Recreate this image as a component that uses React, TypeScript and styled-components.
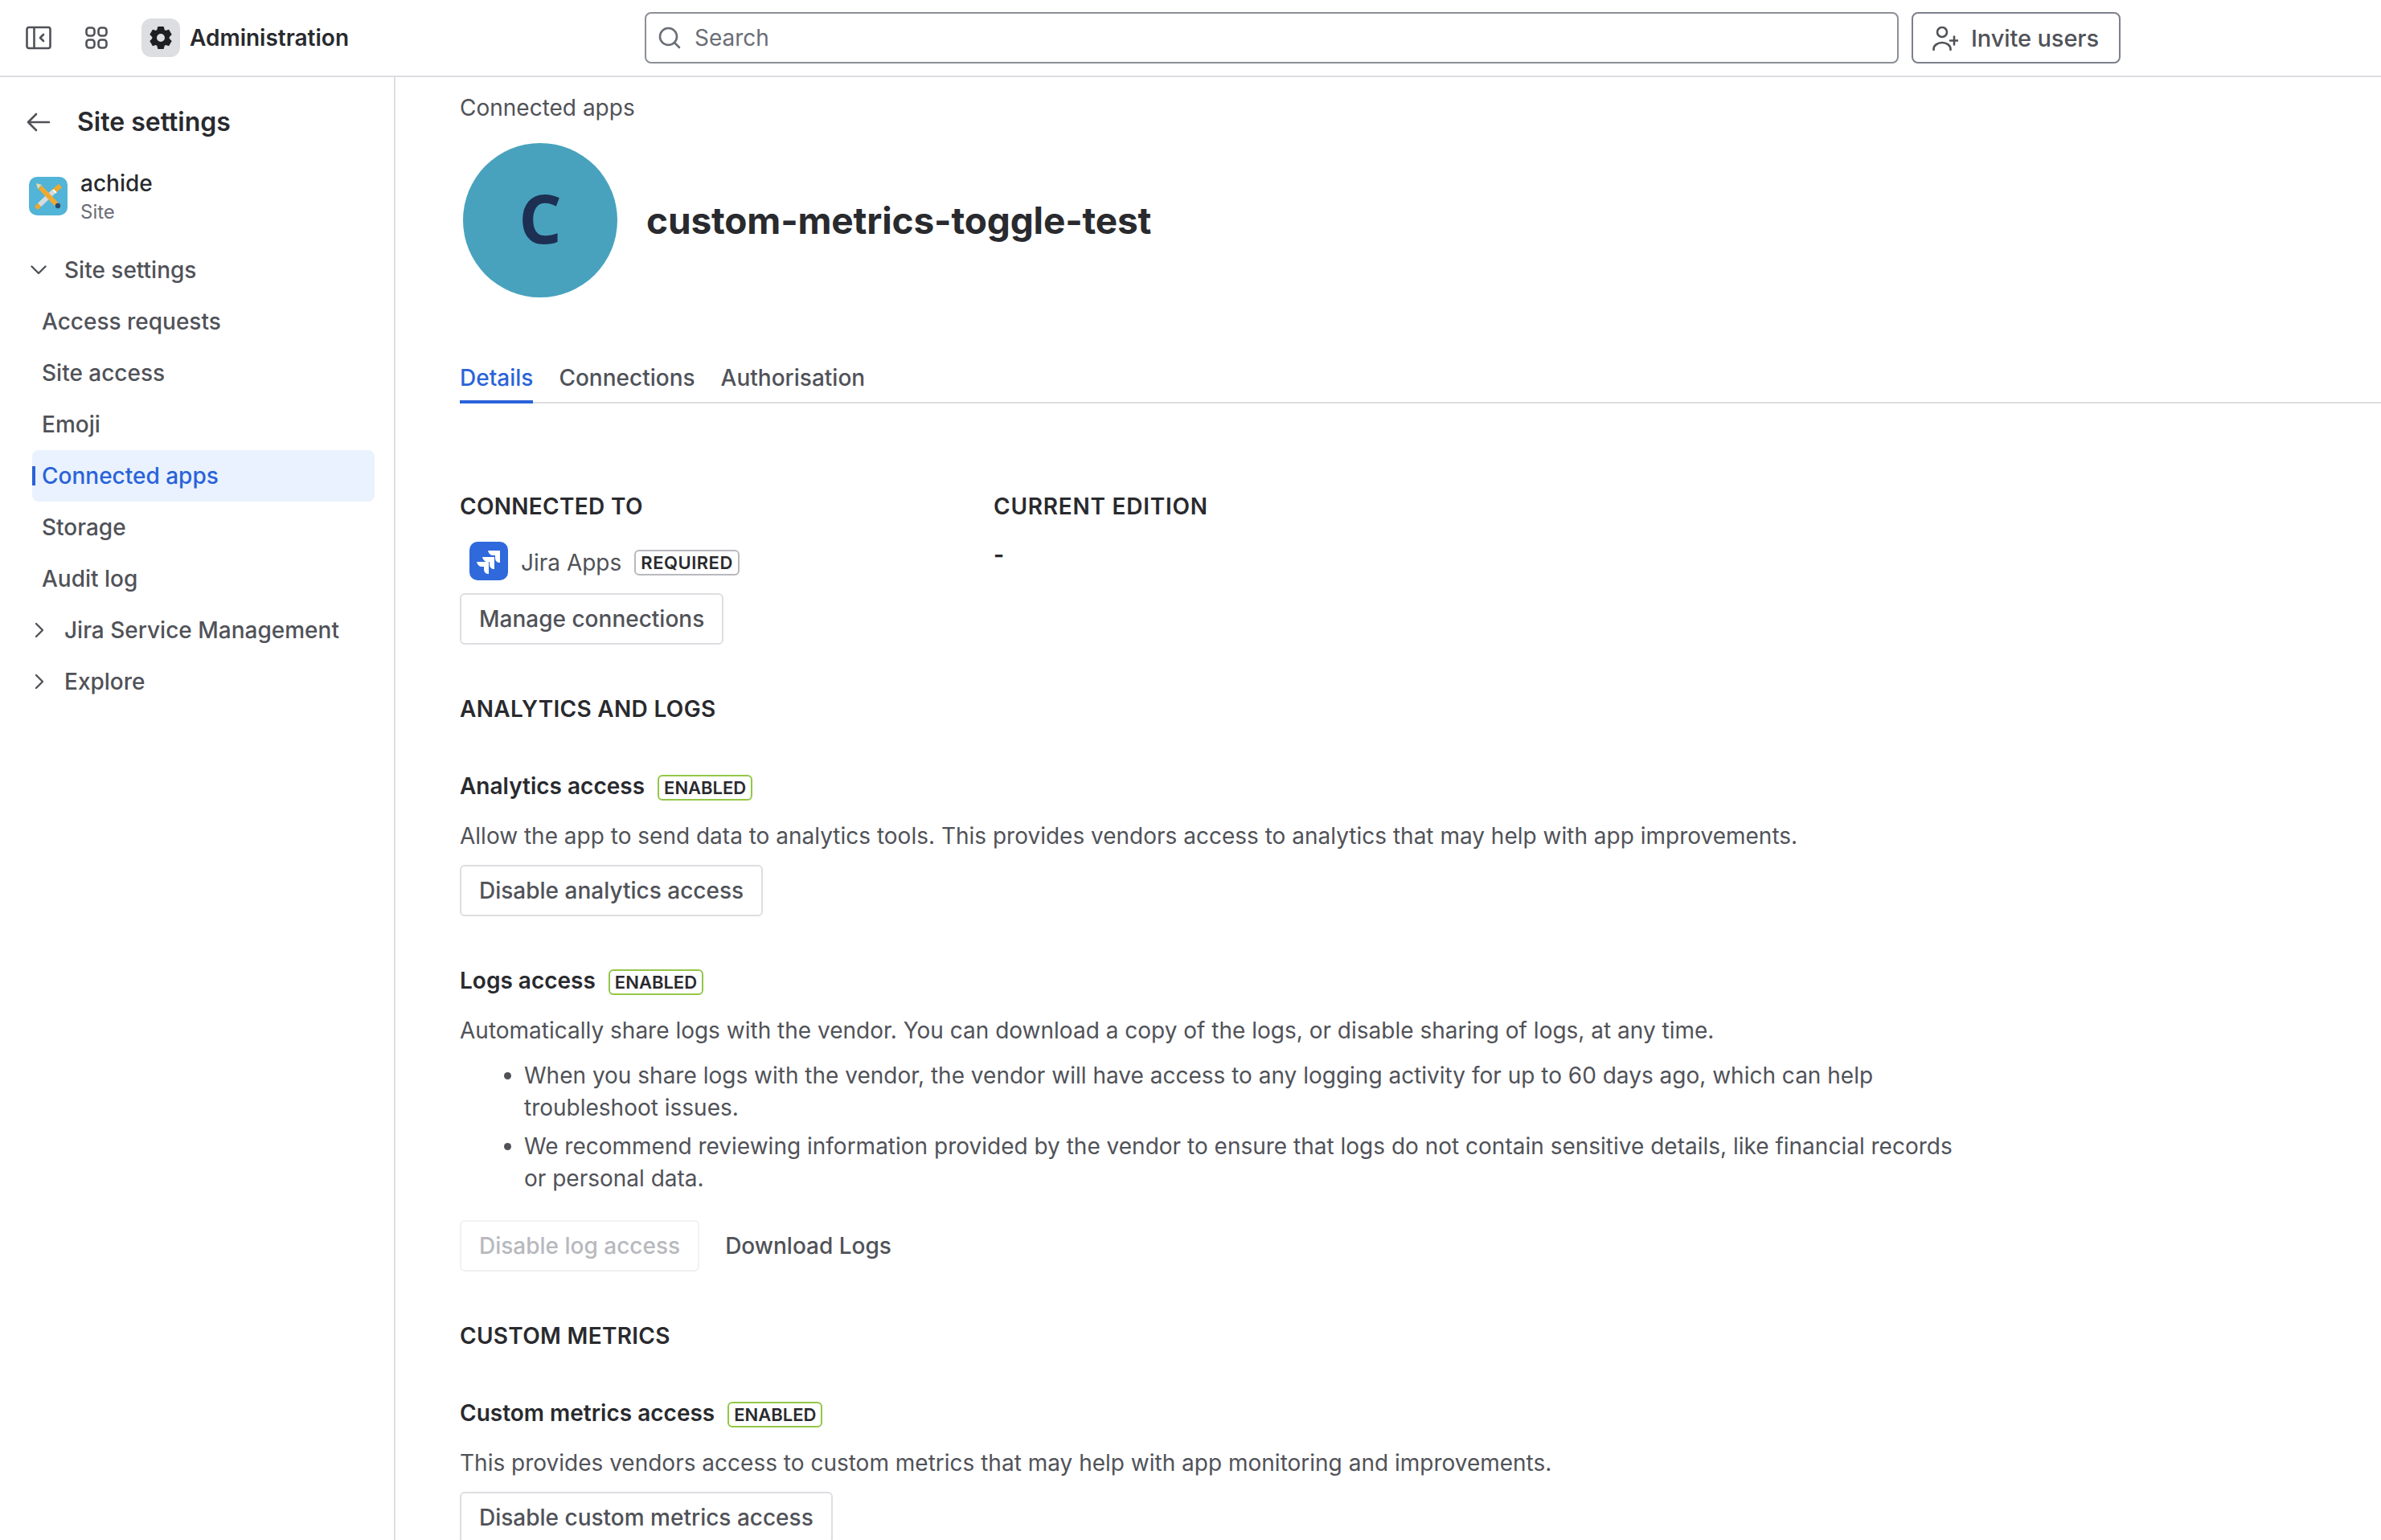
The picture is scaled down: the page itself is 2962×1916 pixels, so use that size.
import React from "react";
import styled, { createGlobalStyle } from "styled-components";

const GlobalStyle = createGlobalStyle`
	html, body {
		margin: 0;
		padding: 0;
		background: #fff;
		overflow: hidden;
	}
	* {
		box-sizing: border-box;
	}
	body {
		font-family: Inter, "Liberation Sans", sans-serif;
		font-size: 28px;
		line-height: 40px;
		color: #505258;
	}
`;

const Page = styled.div`
	width: 2962px;
	height: 1916px;
	display: flex;
	flex-direction: column;
	overflow: hidden;
`;

const TopBar = styled.header`
	height: 96px;
	flex: none;
	display: flex;
	align-items: center;
	padding-left: 32px;
	border-bottom: 2px solid #dddee1;
`;

const BarIcon = styled.span<{ $gap: number }>`
	display: flex;
	color: #505258;
	margin-right: ${(p) => p.$gap}px;
`;

const GearTile = styled.span`
	width: 48px;
	height: 48px;
	border-radius: 12px;
	background: #dddee1;
	display: flex;
	align-items: center;
	justify-content: center;
	color: #1e1f21;
	margin-right: 12px;
`;

const ProductName = styled.span`
	font-weight: 600;
	color: #292a2e;
	width: 566px;
`;

const SearchBox = styled.div`
	width: 1560px;
	height: 64px;
	border: 2px solid #8c8f97;
	border-radius: 8px;
	display: flex;
	align-items: center;
	gap: 17px;
	padding-left: 15px;
	color: #6b6e76;
	margin-right: 16px;
`;

const InviteButton = styled.div`
	width: 260px;
	height: 64px;
	border: 2px solid #7d818a;
	border-radius: 8px;
	display: flex;
	align-items: center;
	gap: 16px;
	padding: 2px 0 0 24px;
	font-size: 29px;
	font-weight: 500;
	letter-spacing: -0.1px;
	color: #505258;
	white-space: nowrap;
`;

const Body = styled.div`
	flex: 1;
	display: flex;
	min-height: 0;
`;

const Sidebar = styled.aside`
	width: 492px;
	flex: none;
	border-right: 2px solid #dddee1;
	padding: 0 24px 0 40px;
`;

const SideHeader = styled.div`
	height: 64px;
	margin-top: 24px;
	margin-left: -7px;
	display: flex;
	align-items: center;
	gap: 33px;
	color: #505258;
`;

const SideTitle = styled.div`
	font-size: 32px;
	font-weight: 600;
	color: #292a2e;
`;

const SiteCard = styled.div`
	margin-top: 20px;
	margin-left: -4px;
	display: flex;
	align-items: center;
	gap: 16px;
	height: 80px;
`;

const SiteName = styled.div`
	color: #292a2e;
	font-weight: 500;
	line-height: 40px;
`;

const SiteKind = styled.div`
	font-size: 24px;
	line-height: 32px;
	color: #6b6e76;
`;

const NavList = styled.nav`
	margin-top: 20px;
	display: flex;
	flex-direction: column;
`;

const NavRow = styled.div<{ $active?: boolean; $child?: boolean }>`
	position: relative;
	height: 64px;
	display: flex;
	align-items: center;
	border-radius: 8px;
	font-weight: 500;
	padding-left: ${(p) => (p.$child ? 12 : 0)}px;
	color: ${(p) => (p.$active ? "#2a63d9" : "#505258")};
	background: ${(p) => (p.$active ? "#e9f2fe" : "transparent")};
	${(p) =>
		p.$active &&
		`&::before {
			content: "";
			position: absolute;
			left: 0;
			top: 20px;
			width: 4px;
			height: 24px;
			background: #2a63d9;
		}`}
`;

const Chevron = styled.span`
	width: 40px;
	margin: 0 12px 0 -12px;
	display: flex;
	justify-content: center;
	color: #505258;
`;

const Main = styled.main`
	flex: 1;
	min-width: 0;
	padding: 18px 0 0 80px;
`;

const Crumb = styled.div``;

const AppHead = styled.div`
	margin-top: 24px;
	margin-left: 4px;
	display: flex;
	align-items: center;
	gap: 36px;
`;

const Avatar = styled.div`
	width: 192px;
	height: 192px;
	padding-bottom: 6px;
	border-radius: 50%;
	background: #48a2bd;
	color: #1d2f52;
	font-family: "Open Sans", sans-serif;
	font-size: 84px;
	font-weight: 700;
	display: flex;
	align-items: center;
	justify-content: center;
`;

const AppTitle = styled.h1`
	margin: 0;
	font-size: 46px;
	line-height: 56px;
	font-weight: 700;
	letter-spacing: -0.15px;
	color: #292a2e;
`;

const TabBar = styled.div`
	margin-top: 67px;
	display: flex;
	gap: 32px;
	height: 65px;
	border-bottom: 2px solid #dddee1;
`;

const Tab = styled.div<{ $active?: boolean }>`
	height: 65px;
	padding-top: 13px;
	font-weight: 500;
	color: ${(p) => (p.$active ? "#2a63d9" : "#505258")};
	border-bottom: ${(p) => (p.$active ? "4px solid #2a63d9" : "none")};
`;

const InfoGrid = styled.div`
	margin-top: 108px;
	display: grid;
	grid-template-columns: 664px auto;
	justify-content: start;
`;

const Heading = styled.div<{ $top?: number; $wide?: boolean }>`
	font-weight: 600;
	letter-spacing: ${(p) => (p.$wide ? 0.75 : 0.3)}px;
	color: #292a2e;
	margin-top: ${(p) => p.$top ?? 0}px;
`;

const Dash = styled.div`
	margin-top: 20px;
	font-weight: 700;
	color: #292a2e;
`;

const JiraRow = styled.div`
	margin-top: 24px;
	margin-left: 12px;
	height: 48px;
	display: flex;
	align-items: center;
	gap: 16px;
`;

const JiraLabel = styled.span`
	margin-top: 3px;
`;

const Badge = styled.span<{ $green?: boolean }>`
	height: 32px;
	margin-top: 4px;
	padding: 0 6px;
	border: 2px solid ${(p) => (p.$green ? "#94c748" : "#b7b9be")};
	border-radius: 6px;
	font-size: 22px;
	line-height: 28px;
	font-weight: 600;
	letter-spacing: ${(p) => (p.$green ? 0 : 0.5)}px;
	color: #292a2e;
	display: inline-flex;
	align-items: center;
	white-space: nowrap;
`;

const Button = styled.div<{ $top?: number; $disabled?: boolean }>`
	display: inline-flex;
	align-items: center;
	height: 64px;
	padding: 0 22px;
	margin-top: ${(p) => p.$top ?? 16}px;
	border: 2px solid ${(p) => (p.$disabled ? "#f0f1f2" : "#dddee1")};
	border-radius: 6px;
	font-weight: 500;
	color: ${(p) => (p.$disabled ? "#b7b9be" : "#505258")};
`;

const LinkButton = styled.div`
	display: inline-flex;
	align-items: center;
	height: 64px;
	font-weight: 500;
	color: #505258;
`;

const AccessTitle = styled.div<{ $top: number }>`
	margin-top: ${(p) => p.$top}px;
	display: flex;
	align-items: center;
	gap: 16px;
	font-weight: 600;
	color: #292a2e;
`;

const Para = styled.p`
	margin: 22px 0 0;
`;

const BulletList = styled.ul`
	margin: 16px 0 0;
	padding: 0 0 0 80px;
	width: 1880px;
	li + li {
		margin-top: 8px;
	}
`;

const ActionRow = styled.div`
	margin-top: 32px;
	display: flex;
	gap: 32px;
	align-items: center;
`;

const PanelIcon = () => (
	<svg width="32" height="32" viewBox="0 0 32 32" fill="none" stroke="currentColor" strokeWidth="2.6">
		<rect x="1.5" y="3" width="29" height="26" rx="2.5" />
		<path d="M10.5 3v26" />
		<path d="M22 12l-4 4 4 4" strokeLinecap="round" strokeLinejoin="round" />
	</svg>
);

const GridIcon = () => (
	<svg width="28" height="28" viewBox="0 0 28 28" fill="none" stroke="currentColor" strokeWidth="2.6">
		<rect x="1.5" y="1.5" width="10" height="10" rx="3.5" />
		<rect x="16.5" y="1.5" width="10" height="10" rx="3.5" />
		<rect x="1.5" y="16.5" width="10" height="10" rx="3.5" />
		<rect x="16.5" y="16.5" width="10" height="10" rx="3.5" />
	</svg>
);

const GearIcon = () => (
	<svg width="30" height="30" viewBox="0 0 30 30">
		<path
			fillRule="evenodd"
			fill="currentColor"
			d="M11.4 1h7.2l1.1 4.1 1.3.8 4.1-1.1 3.6 6.3-3 3v1.8l3 3-3.6 6.3-4.1-1.1-1.3.8L18.6 29h-7.2l-1.1-4.1-1.3-.8-4.1 1.1-3.6-6.3 3-3v-1.8l-3-3 3.6-6.3 4.1 1.1 1.3-.8zM15 10a5 5 0 100 10 5 5 0 000-10z"
		/>
	</svg>
);

const ArrowLeft = () => (
	<svg width="30" height="24" viewBox="0 0 30 24" fill="none" stroke="currentColor" strokeWidth="2.6" strokeLinecap="round" strokeLinejoin="round">
		<path d="M28 12H2M12 2L2 12l10 10" />
	</svg>
);

const SiteLogo = () => (
	<svg width="48" height="48" viewBox="0 0 48 48">
		<rect width="48" height="48" rx="10" fill="#52b4d6" />
		<line x1="13" y1="35" x2="31" y2="18" stroke="#d5dbdf" strokeWidth="6" />
		<line x1="31" y1="18" x2="39" y2="11" stroke="#f0a92e" strokeWidth="6" />
		<line x1="30" y1="16" x2="34" y2="20" stroke="#fff" strokeWidth="2" />
		<line x1="13" y1="35" x2="9" y2="39" stroke="#f0a92e" strokeWidth="6" />
		<line x1="14" y1="13" x2="34" y2="34" stroke="#f0a92e" strokeWidth="6" />
		<path d="M9 8l7 2-5 5z" fill="#e8d9b0" />
		<circle cx="36" cy="36" r="3.2" fill="#2a4b73" />
	</svg>
);

const JiraLogo = () => (
	<svg width="48" height="48" viewBox="0 0 48 48">
		<rect width="48" height="48" rx="10" fill="#2f69dc" />
		<path fill="#fff" d="M23 11h15v15c-3.500 0-6-2-6-6v-3h-3c-3 0-5-2.500-6-6z" />
		<path fill="#fff" d="M16 19h15v15c-3.500 0-6-2-6-6v-3h-3c-3 0-5-2.500-6-6z" />
		<path fill="#fff" d="M9 25h15v15c-3.500 0-6-2-6-6v-3h-3c-3 0-5-2.500-6-6z" />
	</svg>
);

const SearchIcon = () => (
	<svg width="28" height="28" viewBox="0 0 28 28" fill="none" stroke="currentColor" strokeWidth="2.6" strokeLinecap="round">
		<circle cx="12.500" cy="12.500" r="10.500" />
		<path d="M20 20l6 6" />
	</svg>
);

const UserPlusIcon = () => (
	<svg width="32" height="30" viewBox="0 0 32 30" fill="none" stroke="currentColor" strokeWidth="2.6" strokeLinecap="round" strokeLinejoin="round">
		<circle cx="12" cy="7" r="6" />
		<path d="M1.500 29v-1a10.500 8 0 0 1 21 0v1" />
		<path d="M27 12.500v10M22 17.500h10" />
	</svg>
);

const ChevronGlyph = ({ dir }: { dir: "down" | "right" }) => (
	<svg width="20" height="20" viewBox="0 0 20 20" fill="none" stroke="currentColor" strokeWidth="2.4" strokeLinecap="round" strokeLinejoin="round">
		<path d={dir === "down" ? "M1.500 5.500l8.500 8.500 8.500-8.500" : "M7 2l8 8-8 8"} />
	</svg>
);

const App = () => {
	return (
		<Page>
			<GlobalStyle />
			<TopBar>
				<BarIcon $gap={42}><PanelIcon /></BarIcon>
				<BarIcon $gap={42}><GridIcon /></BarIcon>
				<GearTile><GearIcon /></GearTile>
				<ProductName>Administration</ProductName>
				<SearchBox>
					<SearchIcon />
					Search
				</SearchBox>
				<InviteButton>
					<UserPlusIcon />
					Invite users
				</InviteButton>
			</TopBar>
			<Body>
				<Sidebar>
					<SideHeader>
						<ArrowLeft />
						<SideTitle>Site settings</SideTitle>
					</SideHeader>
					<SiteCard>
						<SiteLogo />
						<div>
							<SiteName>achide</SiteName>
							<SiteKind>Site</SiteKind>
						</div>
					</SiteCard>
					<NavList>
						<NavRow><Chevron><ChevronGlyph dir="down" /></Chevron>Site settings</NavRow>
						<NavRow $child>Access requests</NavRow>
						<NavRow $child>Site access</NavRow>
						<NavRow $child>Emoji</NavRow>
						<NavRow $child $active>Connected apps</NavRow>
						<NavRow $child>Storage</NavRow>
						<NavRow $child>Audit log</NavRow>
						<NavRow><Chevron><ChevronGlyph dir="right" /></Chevron>Jira Service Management</NavRow>
						<NavRow><Chevron><ChevronGlyph dir="right" /></Chevron>Explore</NavRow>
					</NavList>
				</Sidebar>
				<Main>
					<Crumb>Connected apps</Crumb>
					<AppHead>
						<Avatar>C</Avatar>
						<AppTitle>custom-metrics-toggle-test</AppTitle>
					</AppHead>
					<TabBar>
						<Tab $active>Details</Tab>
						<Tab>Connections</Tab>
						<Tab>Authorisation</Tab>
					</TabBar>
					<InfoGrid>
						<div>
							<Heading>CONNECTED TO</Heading>
							<JiraRow>
								<JiraLogo />
								<JiraLabel>Jira Apps</JiraLabel>
								<Badge>REQUIRED</Badge>
							</JiraRow>
							<Button>Manage connections</Button>
						</div>
						<div>
							<Heading $wide>CURRENT EDITION</Heading>
							<Dash>-</Dash>
						</div>
					</InfoGrid>
					<Heading $top={60}>ANALYTICS AND LOGS</Heading>
					<AccessTitle $top={56}>Analytics access <Badge $green>ENABLED</Badge></AccessTitle>
					<Para>Allow the app to send data to analytics tools. This provides vendors access to analytics that may help with app improvements.</Para>
					<Button>Disable analytics access</Button>
					<AccessTitle $top={60}>Logs access <Badge $green>ENABLED</Badge></AccessTitle>
					<Para>Automatically share logs with the vendor. You can download a copy of the logs, or disable sharing of logs, at any time.</Para>
					<BulletList>
						<li>When you share logs with the vendor, the vendor will have access to any logging activity for up to 60 days ago, which can help troubleshoot issues.</li>
						<li>We recommend reviewing information provided by the vendor to ensure that logs do not contain sensitive details, like financial records or personal data.</li>
					</BulletList>
					<ActionRow>
						<Button $top={0} $disabled>Disable log access</Button>
						<LinkButton>Download Logs</LinkButton>
					</ActionRow>
					<Heading $top={60}>CUSTOM METRICS</Heading>
					<AccessTitle $top={56}>Custom metrics access <Badge $green>ENABLED</Badge></AccessTitle>
					<Para>This provides vendors access to custom metrics that may help with app monitoring and improvements.</Para>
					<Button>Disable custom metrics access</Button>
				</Main>
			</Body>
		</Page>
	);
};

export default App;
